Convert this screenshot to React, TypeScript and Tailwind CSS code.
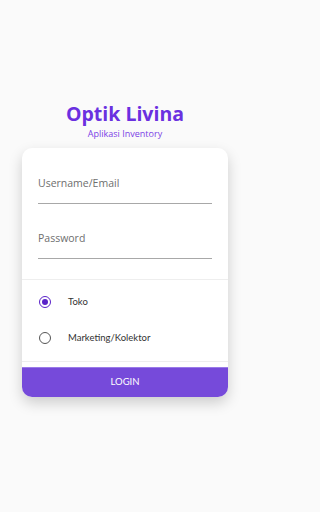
import React, { useState } from "react";

export default function App() {
  const [role, setRole] = useState("toko");
  return (
    <div className="min-h-[512px] w-full bg-[#fafafa]">
      <div className="w-[250px] pt-[101px]" style={{ fontFamily: '"Open Sans", sans-serif' }}>
        <div className="flex flex-col items-center">
          <h1 className="text-[19.5px] leading-[26px] font-bold text-[#6a30e0]" style={{ fontFamily: '"Open Sans", sans-serif' }}>
            Optik Livina
          </h1>
          <p className="text-[9px] leading-[13px] text-[#7a3fe6]">Aplikasi Inventory</p>
        </div>
        <div className="mx-auto mt-[8px] w-[206px] overflow-hidden rounded-[10px] bg-white shadow-[0_6px_14px_rgba(0,0,0,0.18)]">
          <div className="px-4">
            <div className="pt-[28px]">
              <div className="text-[10.5px] leading-[14px] text-[#6e6e6e]">Username/Email</div>
              <div className="mt-[13px] h-px bg-[#a8a8a8]" />
            </div>
            <div className="pt-[27px]">
              <div className="text-[10.5px] leading-[14px] text-[#6e6e6e]">Password</div>
              <div className="mt-[13px] h-px bg-[#a8a8a8]" />
            </div>
          </div>
          <div className="mt-[20px] h-px bg-[#eeeeee]" />
          <div className="flex flex-col pt-[4px]" style={{ fontFamily: 'Lato, sans-serif' }}>
            <button onClick={() => setRole("toko")} className="flex h-[36px] items-center pl-[17px] text-left">
              <span className={"flex h-[12px] w-[12px] items-center justify-center rounded-full border-[1.5px] " + (role === "toko" ? "border-[#5a22c8]" : "border-[#555555]")}>
                <span className="h-[6px] w-[6px] rounded-full bg-[#5a22c8]" style={{ opacity: role === "toko" ? 1 : 0 }} />
              </span>
              <span className="ml-[17px] text-[9.5px] text-[#333]">Toko</span>
            </button>
            <button onClick={() => setRole("marketing")} className="flex h-[36px] items-center pl-[17px] text-left">
              <span className={"flex h-[12px] w-[12px] items-center justify-center rounded-full border-[1.5px] " + (role === "marketing" ? "border-[#5a22c8]" : "border-[#555555]")}>
                <span className="h-[6px] w-[6px] rounded-full bg-[#5a22c8]" style={{ opacity: role === "marketing" ? 1 : 0 }} />
              </span>
              <span className="ml-[17px] text-[9.5px] text-[#333]">Marketing/Kolektor</span>
            </button>
          </div>
          <div className="mt-[5px] h-px bg-[#eeeeee]" />
          <div className="h-[5px]" />
          <button className="flex h-[30px] w-full items-center justify-center border-t border-[#9a7ae8] bg-[#764ada] text-[9.5px] text-white" style={{ fontFamily: 'Lato, sans-serif' }}>
            LOGIN
          </button>
        </div>
      </div>
    </div>
  );
}
